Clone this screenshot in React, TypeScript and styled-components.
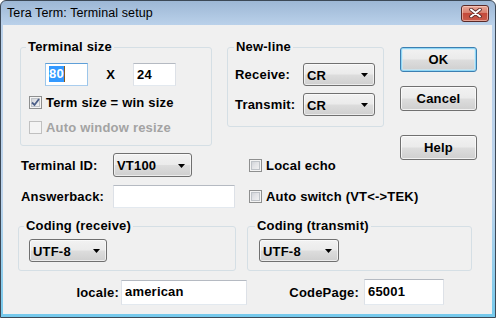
import React from "react";
import styled, { createGlobalStyle } from "styled-components";

const GlobalStyle = createGlobalStyle`
  html, body { margin: 0; padding: 0; background: #ffffff; }
  * { box-sizing: border-box; }
`;

const Window = styled.div`
  width: 496px;
  height: 318px;
  display: flex;
  flex-direction: column;
  border: 1px solid #3c4856;
  border-radius: 6px 6px 0 0;
  background: linear-gradient(#9db7d5 0px, #bad1ea 24px, #bcd3eb 200px, #74c9ec 318px);
  font-family: "Liberation Sans", Arial, sans-serif;
  color: #000;
`;

const TitleBar = styled.div`
  height: 24px;
  flex: none;
  display: flex;
  align-items: center;
  justify-content: space-between;
  padding: 0 6px 0 6px;
`;

const Title = styled.span`
  font-size: 12.5px;
  letter-spacing: 0.1px;
  color: #000;
`;

const CloseButton = styled.div`
  width: 28px;
  height: 17px;
  border: 1px solid #5a2a28;
  border-radius: 3px;
  display: flex;
  align-items: center;
  justify-content: center;
  background: linear-gradient(#e8a899 0%, #d9806f 45%, #c54a3b 50%, #c95c4c 100%);
  box-shadow: inset 0 0 0 1px rgba(255, 220, 210, 0.55);
`;

const Body = styled.div`
  flex: 1;
  margin: 0 3px 3px 2px;
  background: #f0f0f0;
  display: flex;
  flex-direction: column;
  padding: 15px 15px 0 15px;
`;

const TopArea = styled.div`
  display: flex;
  align-items: flex-start;
`;

const LeftArea = styled.div`
  flex: none;
  width: 382px;
  display: flex;
  flex-direction: column;
`;

const GroupRow = styled.div`
  display: flex;
  align-items: flex-start;
`;

const GroupBox = styled.div<{ $w: number; $h: number; $ml?: number; $mt?: number }>`
  flex: none;
  width: ${(p) => p.$w}px;
  height: ${(p) => p.$h}px;
  margin-left: ${(p) => p.$ml ?? 0}px;
  margin-top: ${(p) => p.$mt ?? 0}px;
  border: 1px solid #d5dfe5;
  border-radius: 3px;
  display: flex;
  flex-direction: column;
  align-items: flex-start;
`;

const Caption = styled.div<{ $indent: number }>`
  margin: -8px 0 0 ${(p) => p.$indent}px;
  padding: 0 2px;
  height: 14px;
  line-height: 14px;
  background: #f0f0f0;
  font-weight: bold;
  font-size: 13px;
  letter-spacing: 0.2px;
  white-space: nowrap;
`;

const Row = styled.div<{ $mt?: number; $ml?: number }>`
  display: flex;
  align-items: center;
  margin-top: ${(p) => p.$mt ?? 0}px;
  margin-left: ${(p) => p.$ml ?? 0}px;
`;

const Label = styled.span<{ $w?: number; $right?: boolean; $disabled?: boolean }>`
  flex: none;
  ${(p) => (p.$w ? `width: ${p.$w}px;` : "")}
  text-align: ${(p) => (p.$right ? "right" : "left")};
  font-weight: bold;
  font-size: 13px;
  letter-spacing: 0.2px;
  white-space: nowrap;
  color: ${(p) => (p.$disabled ? "#a3a3a3" : "#000")};
`;

const Times = styled.span`
  width: 45px;
  text-align: center;
  font-weight: bold;
  font-size: 13px;
`;

const TextBox = styled.div<{ $w: number; $h?: number; $ml?: number; $focus?: boolean }>`
  flex: none;
  width: ${(p) => p.$w}px;
  height: ${(p) => p.$h ?? 23}px;
  margin-left: ${(p) => p.$ml ?? 0}px;
  background: #ffffff;
  border: 1px solid;
  border-color: ${(p) =>
    p.$focus ? "#5e9fd8 #9cc6ea #a9cdee #9cc6ea" : "#b5bac2 #dde1e7 #e3e9ef #dde1e7"};
  display: flex;
  align-items: center;
  padding-left: 3px;
  padding-bottom: 1px;
  font-weight: bold;
  font-size: 13px;
  letter-spacing: 0.2px;
`;

const Selected = styled.span`
  background: #3399ff;
  color: #ffffff;
  line-height: 16px;
`;

const Caret = styled.span`
  width: 1px;
  height: 16px;
  background: #8a5a1c;
`;

const DropDown = styled.div<{ $w: number; $h?: number; $ml?: number }>`
  flex: none;
  width: ${(p) => p.$w}px;
  height: ${(p) => p.$h ?? 23}px;
  margin-left: ${(p) => p.$ml ?? 0}px;
  border: 1px solid #707070;
  border-radius: 3px;
  background: linear-gradient(#f2f2f2 0%, #ebebeb 48%, #dddddd 52%, #cfcfcf 100%);
  box-shadow: inset 0 0 0 1px rgba(255, 255, 255, 0.6);
  display: flex;
  align-items: center;
  justify-content: space-between;
  padding: 1px 6px 0 3px;
  font-weight: bold;
  font-size: 13px;
  letter-spacing: 0.2px;
`;

const Arrow = () => (
  <svg width="7" height="4" viewBox="0 0 7 4">
    <polygon points="0,0 7,0 3.5,4" fill="#000" />
  </svg>
);

const ButtonCol = styled.div`
  flex: none;
  padding-top: 7px;
  display: flex;
  flex-direction: column;
`;

const PushButton = styled.div<{ $default?: boolean; $mt?: number }>`
  width: 77px;
  height: 25px;
  margin-top: ${(p) => p.$mt ?? 0}px;
  border: 1px solid ${(p) => (p.$default ? "#3c7fb1" : "#707070")};
  border-radius: 3px;
  background: linear-gradient(#f2f2f2 0%, #ebebeb 48%, #dddddd 52%, #cfcfcf 100%);
  box-shadow: ${(p) =>
    p.$default
      ? "inset 0 0 0 1px #8fd6f5, inset 0 0 0 2px rgba(200,235,250,0.6)"
      : "inset 0 0 0 1px rgba(255,255,255,0.7)"};
  display: flex;
  align-items: center;
  justify-content: center;
  font-weight: bold;
  font-size: 13px;
  letter-spacing: 0.2px;
`;

const CheckLine = styled.div<{ $mt?: number; $ml?: number }>`
  height: 13px;
  display: flex;
  align-items: center;
  gap: 4px;
  margin-top: ${(p) => p.$mt ?? 0}px;
  margin-left: ${(p) => p.$ml ?? 0}px;
`;

const Box = styled.span<{ $disabled?: boolean }>`
  flex: none;
  width: 13px;
  height: 13px;
  border: 1px solid ${(p) => (p.$disabled ? "#c0c0c0" : "#8e8f8f")};
  background: ${(p) =>
    p.$disabled
      ? "#f4f4f4"
      : "linear-gradient(135deg, #c6cad0 0%, #e2e3e6 45%, #f7f7f7 100%)"};
  box-shadow: ${(p) => (p.$disabled ? "none" : "inset 0 0 0 1px #f4f4f4, inset 0 0 0 2px #bfc3c8")};
  display: flex;
  align-items: center;
  justify-content: center;
`;

const CheckBox = ({ checked, disabled }: { checked?: boolean; disabled?: boolean }) => (
  <Box $disabled={disabled}>
    {checked && (
      <svg width="9" height="9" viewBox="0 0 9 9">
        <path d="M1 4.5 L3.5 7 L8 1" stroke="#4c5f88" strokeWidth="1.8" fill="none" />
      </svg>
    )}
  </Box>
);

const CheckText = styled.span<{ $disabled?: boolean }>`
  font-weight: bold;
  font-size: 13px;
  letter-spacing: 0.2px;
  white-space: nowrap;
  color: ${(p) => (p.$disabled ? "#a3a3a3" : "#000")};
`;

const CodingRow = styled.div`
  display: flex;
  align-items: flex-start;
  margin-top: 18px;
`;

const LocaleRow = styled.div`
  display: flex;
  align-items: center;
  margin-top: 8px;
`;

export default function App() {
  return (
    <>
      <GlobalStyle />
      <Window>
        <TitleBar>
          <Title>Tera Term: Terminal setup</Title>
          <CloseButton>
            <svg width="13" height="10" viewBox="0 0 13 10">
              <path d="M2 1.5 L11 8.5 M11 1.5 L2 8.5" stroke="#5a2a28" strokeWidth="3.6" strokeLinecap="round" />
              <path d="M2 1.5 L11 8.5 M11 1.5 L2 8.5" stroke="#ffffff" strokeWidth="2" strokeLinecap="round" />
            </svg>
          </CloseButton>
        </TitleBar>
        <Body>
          <TopArea>
            <LeftArea>
              <GroupRow>
                <GroupBox $w={192} $h={99} $ml={2} $mt={7}>
                  <Caption $indent={5}>Terminal size</Caption>
                  <Row $mt={9} $ml={24}>
                    <TextBox $w={43} $focus>
                      <Selected>80</Selected>
                      <Caret />
                    </TextBox>
                    <Times>X</Times>
                    <TextBox $w={43}>24</TextBox>
                  </Row>
                  <CheckLine $mt={10} $ml={8}>
                    <CheckBox checked />
                    <CheckText>Term size = win size</CheckText>
                  </CheckLine>
                  <CheckLine $mt={12} $ml={8}>
                    <CheckBox disabled />
                    <CheckText $disabled>Auto window resize</CheckText>
                  </CheckLine>
                </GroupBox>
                <GroupBox $w={157} $h={80} $ml={15} $mt={7}>
                  <Caption $indent={6}>New-line</Caption>
                  <Row $mt={9} $ml={7}>
                    <Label $w={68}>Receive:</Label>
                    <DropDown $w={72}>
                      CR
                      <Arrow />
                    </DropDown>
                  </Row>
                  <Row $mt={7} $ml={7}>
                    <Label $w={68}>Transmit:</Label>
                    <DropDown $w={72}>
                      CR
                      <Arrow />
                    </DropDown>
                  </Row>
                </GroupBox>
              </GroupRow>
              <Row $mt={7} $ml={3}>
                <Label $w={92}>Terminal ID:</Label>
                <DropDown $w={79} $h={24}>
                  VT100
                  <Arrow />
                </DropDown>
                <CheckLine $ml={57}>
                  <CheckBox />
                  <CheckText>Local echo</CheckText>
                </CheckLine>
              </Row>
              <Row $mt={8} $ml={3}>
                <Label $w={92}>Answerback:</Label>
                <TextBox $w={122} />
                <CheckLine $ml={14}>
                  <CheckBox />
                  <CheckText>Auto switch (VT&lt;-&gt;TEK)</CheckText>
                </CheckLine>
              </Row>
            </LeftArea>
            <ButtonCol>
              <PushButton $default>OK</PushButton>
              <PushButton $mt={14}>Cancel</PushButton>
              <PushButton $mt={24}>Help</PushButton>
            </ButtonCol>
          </TopArea>
          <CodingRow>
            <GroupBox $w={218} $h={45}>
              <Caption $indent={5}>Coding (receive)</Caption>
              <Row $mt={6} $ml={10}>
                <DropDown $w={78}>
                  UTF-8
                  <Arrow />
                </DropDown>
              </Row>
            </GroupBox>
            <GroupBox $w={225} $h={45} $ml={11}>
              <Caption $indent={7}>Coding (transmit)</Caption>
              <Row $mt={6} $ml={11}>
                <DropDown $w={80}>
                  UTF-8
                  <Arrow />
                </DropDown>
              </Row>
            </GroupBox>
          </CodingRow>
          <LocaleRow>
            <Label $w={101} $right>locale:</Label>
            <TextBox $w={126} $h={25} $ml={2}>american</TextBox>
            <Label $w={112} $right>CodePage:</Label>
            <TextBox $w={80} $h={26} $ml={5}>65001</TextBox>
          </LocaleRow>
        </Body>
      </Window>
    </>
  );
}
